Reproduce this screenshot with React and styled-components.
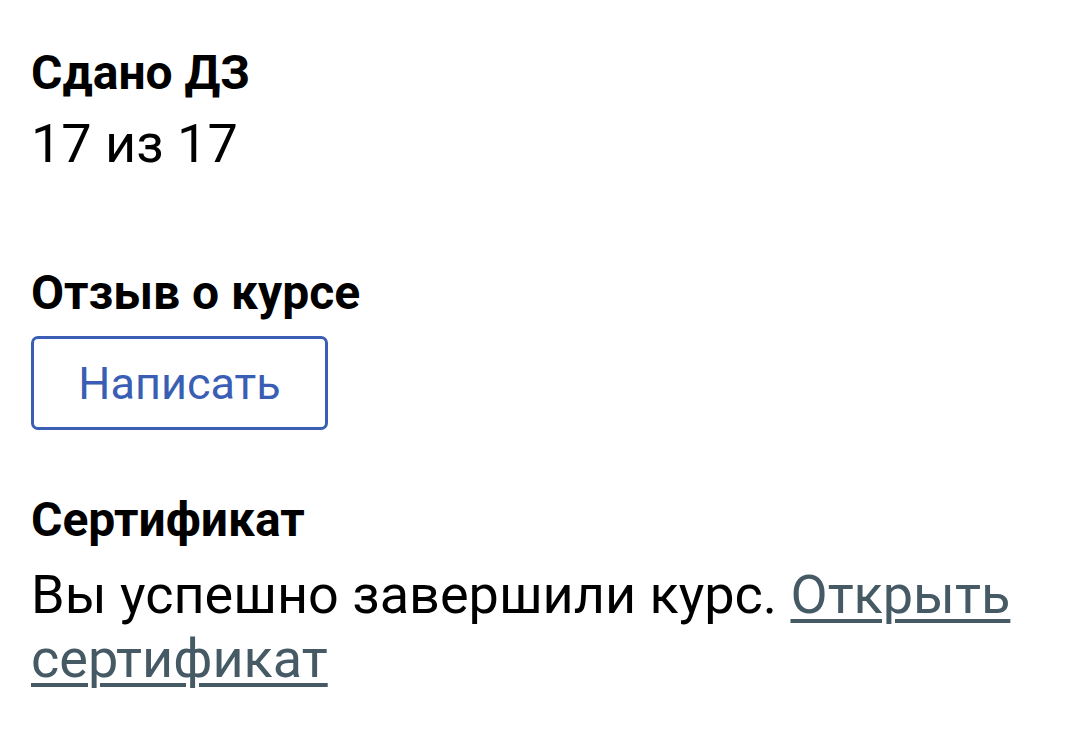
import React from "react";
import styled, { createGlobalStyle } from "styled-components";

const Global = createGlobalStyle`
  html, body { margin: 0; padding: 0; background: #ffffff; }
  body { font-family: Roboto, "Noto Sans", "Liberation Sans", sans-serif; color: #000; }
`;

const Page = styled.main`
  padding: 43px 32px 0 31px;
  display: flex;
  flex-direction: column;
`;

const Section = styled.section`
  display: flex;
  flex-direction: column;
  align-items: flex-start;
  gap: ${(p) => p.$gap || 10}px;
  margin-bottom: ${(p) => p.$after || 0}px;
`;

const Label = styled.h3`
  margin: 0;
  font-size: 48px;
  line-height: 60px;
  font-weight: 700;
`;

const Value = styled.p`
  margin: 0;
  font-size: 54px;
  line-height: 64px;
  font-weight: 400;
`;

const OutlineButton = styled.button`
  box-sizing: border-box;
  width: 297px;
  height: 94px;
  border: 3px solid #3a5eb4;
  border-radius: 7px;
  background: #fff;
  color: #3a5eb4;
  font-family: inherit;
  font-size: 45px;
  font-weight: 400;
  padding: 0;
  display: flex;
  align-items: center;
  justify-content: center;
`;

const Link = styled.a`
  color: #455a64;
  text-decoration: underline;
  text-decoration-thickness: 4px;
  text-underline-offset: 6px;
`;

export default function App() {
  return (
    <>
      <Global />
      <Page>
        <Section $gap={9} $after={87}>
          <Label>Сдано ДЗ</Label>
          <Value>17 из 17</Value>
        </Section>
        <Section $gap={13} $after={60}>
          <Label>Отзыв о курсе</Label>
          <OutlineButton>Написать</OutlineButton>
        </Section>
        <Section $gap={13}>
          <Label>Сертификат</Label>
          <Value>
            Вы успешно завершили курс. <Link href="#">Открыть сертификат</Link>
          </Value>
        </Section>
      </Page>
    </>
  );
}
